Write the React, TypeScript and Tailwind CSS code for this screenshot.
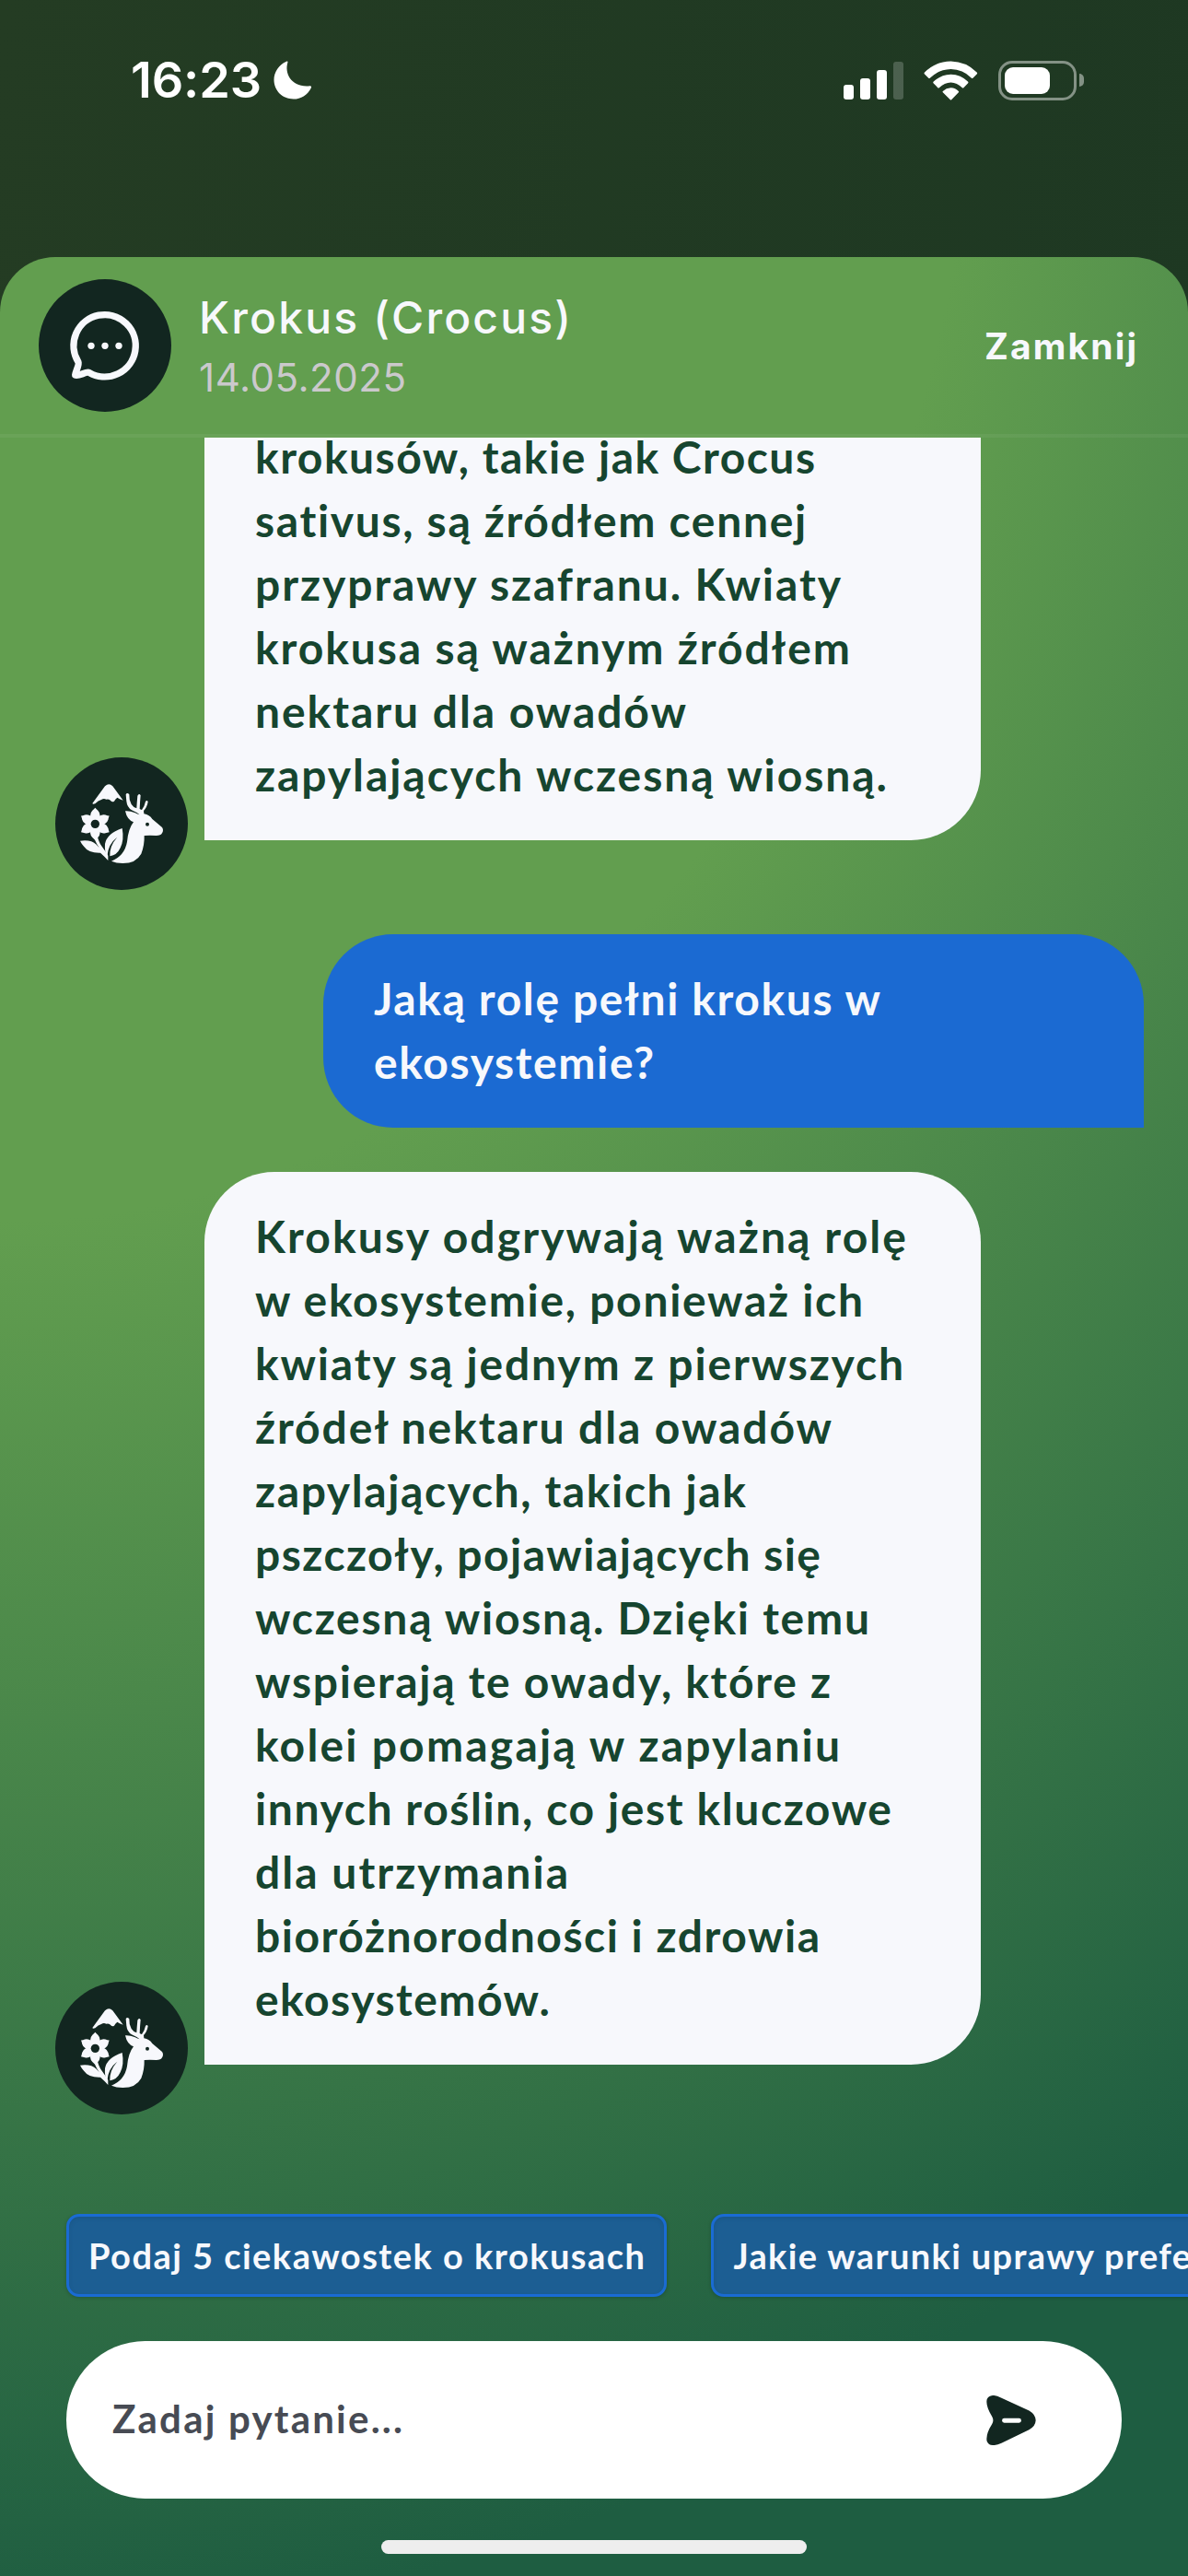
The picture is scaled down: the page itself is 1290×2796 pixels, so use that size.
import { useLayoutEffect, useRef, useState } from "react";

type LineProps = { text: string; width: number; chars?: number };

/** One line of text whose tracking is adjusted so that it spans `width` pixels. */
function Line({ text, width, chars }: LineProps) {
  const ref = useRef<HTMLSpanElement>(null);
  const [spacing, setSpacing] = useState(0);
  const count = chars ?? text.length;
  useLayoutEffect(() => {
    const node = ref.current?.firstChild;
    if (!node) return;
    const range = document.createRange();
    range.setStart(node, 0);
    range.setEnd(node, count);
    const natural = range.getBoundingClientRect().width - spacing * count;
    setSpacing((width - natural) / (count - 1));
  }, [text, width, count]);
  return (
    <span ref={ref} className="block whitespace-nowrap" style={{ letterSpacing: `${spacing}px` }}>
      {text}
    </span>
  );
}

function StatusBar() {
  return (
    <div className="flex h-[174px] items-center justify-between pr-[113px] pl-[142px] text-white">
      <div className="flex items-center gap-[13px] font-[Inter,sans-serif] text-[54px] leading-none font-semibold">
        <div className="w-[142px]">
          <Line text="16:23" width={142} />
        </div>
        <svg className="h-[42px] w-[42px]" viewBox="0 0 42 42" fill="currentColor">
          <path d="M14 .8C14.6.1 15.8.8 15.4 1.8C11.5 14 20 29.5 39.5 27.3C40.9 27.1 41.4 28.3 40.8 29.4C36.8 37.2 29.8 41.5 21.7 41.5C9.6 41.5.5 32.5.5 20.6C.5 12.6 5.6 4.6 14 .8Z" />
        </svg>
      </div>
      <div className="flex items-center">
        <div className="flex h-[41px] items-end gap-[7px]">
          <div className="h-4 w-[11px] rounded-[3px] bg-white" />
          <div className="h-[23px] w-[11px] rounded-[3px] bg-white" />
          <div className="h-8 w-[11px] rounded-[3px] bg-white" />
          <div className="h-[41px] w-[11px] rounded-[3px] bg-white/20" />
        </div>
        <svg className="ml-[22px] h-[43px] w-[59px]" viewBox="370 74 176 128" fill="currentColor">
          <path d="M373 117Q370 114 373 111Q408 76 458 75Q508 76 542 111Q545 114 542 117L530 129Q527 132 524 129Q497 102 458 101Q419 102 391 129Q388 132 385 129Z" />
          <path d="M402 147Q399 144 402 141Q426 119 458 118Q490 119 513 141Q516 144 513 147L500 160Q497 163 494 160Q478 145 458 144Q437 145 421 160Q418 163 415 160Z" />
          <path d="M432 176Q430 174 432 172Q443 162 458 161Q473 162 483 172Q485 174 483 176L460 200Q458 202 456 200Z" />
        </svg>
        <div className="ml-[22px] flex items-center gap-[3px]">
          <div className="h-[43px] w-[85px] rounded-[15px] border-[3px] border-white/45 p-1">
            <div className="h-[29px] w-[49px] rounded-[9px] bg-white" />
          </div>
          <div className="h-[14px] w-[5px] rounded-r-full bg-white/45" />
        </div>
      </div>
    </div>
  );
}

function Header() {
  return (
    <header className="flex h-[196px] shrink-0 items-center justify-between border-b-4 border-white/5 pr-[54px] pl-[42px] font-[Inter,sans-serif] text-[#f7f8fc]">
      <div className="flex items-center gap-[30px]">
        <svg className="size-36" viewBox="126 100 432 432" fill="none">
          <circle cx="342" cy="316" r="216" fill="#122620" />
          <path
            d="M290 404A101 101 0 1 0 255 370C259 379 246 402 245 412C255 418 280 400 290 404Z"
            stroke="#f7f8fc"
            strokeWidth="22"
            strokeLinejoin="round"
          />
          <circle cx="297" cy="317" r="11" fill="#f7f8fc" />
          <circle cx="342" cy="317" r="11" fill="#f7f8fc" />
          <circle cx="387" cy="317" r="11" fill="#f7f8fc" />
        </svg>
        <div className="flex flex-col pt-1">
          <div className="h-[66px] text-[48px] leading-[64px] font-medium">
            <Line text="Krokus (Crocus)" width={404} />
          </div>
          <div className="h-[62px] text-[42px] leading-[62px] text-[#cbc9cc]">
            <Line text="14.05.2025" width={225} />
          </div>
        </div>
      </div>
      <div className="w-[167px] text-[39px] leading-none font-bold">
        <Line text="Zamknij" width={165} />
      </div>
    </header>
  );
}

function Avatar() {
  return (
    <svg className="size-36 shrink-0" viewBox="60 66 432 432" fill="#f7f8fc">
      <circle cx="276" cy="282" r="216" fill="#122620" />
      <path d="M181 216L222 160Q235 147 247 160L281 206Q268 201 262 197Q256 201 252 209Q246 213 241 208Q236 200 226 203Q218 199 210 204Q200 206 190 217Q182 220 181 216Z" />
      {[0, 60, 120, 180, 240, 300].map((angle) => (
        <path
          key={angle}
          d="M180 278Q168 252 181 239Q186 235 190 230Q194 235 199 239Q212 252 200 278Z"
          transform={`rotate(${angle} 190 283)`}
        />
      ))}
      <circle cx="190" cy="283" r="14" fill="#122620" />
      <path d="M184 308Q189 305 195 308Q198 338 213 358Q222 370 232 386L232 402Q222 390 207 377Q168 378 154 357Q146 349 141 338Q176 333 194 350Q199 355 203 360Q185 335 184 308Z" />
      <path d="M278 297Q285 335 272 361Q261 385 238 388Q236 355 262 326Q232 348 229 389Q220 373 222 348Q228 314 278 297Z" />
      <path d="M288 241Q304 240 320 247Q328 251 335 253Q325 245 309 238Q294 228 292 209L290 187Q294 179 301 187Q300 205 308 219Q315 230 325 232Q326 212 328 191Q333 182 338 190Q336 211 335 234Q340 237 342 237Q350 228 354 210Q359 204 362 211Q359 229 348 240L349 250Q367 253 376 267L408 294Q414 303 408 313Q404 321 389 321Q368 319 350 321Q351 352 340 380Q323 411 280 411Q258 411 243 404Q286 386 294 341Q298 298 315 277Q294 270 288 241Z" />
      <circle cx="360" cy="284" r="6" fill="#122620" />
    </svg>
  );
}

type Lines = [string, number][];

function BotMessage({ lines, continued = false }: { lines: Lines; continued?: boolean }) {
  return (
    <div className="flex shrink-0 items-end gap-[18px] pl-[60px]">
      <Avatar />
      <div
        className={`mb-[54px] w-[843px] bg-[#f7f8fc] pt-[35px] pb-[37px] pl-[55px] font-[Lato,sans-serif] text-[48px] leading-[69px] font-bold text-[#16452f] ${
          continued ? "rounded-br-[76px]" : "rounded-t-[76px] rounded-br-[76px]"
        }`}
      >
        {lines.map(([text, width]) => (
          <Line key={text} text={text} width={width} />
        ))}
      </div>
    </div>
  );
}

function UserMessage({ lines }: { lines: Lines }) {
  return (
    <div className="mr-12 w-[891px] shrink-0 self-end rounded-[76px] rounded-br-none bg-[#1b6ad2] pt-[35px] pb-[37px] pl-[55px] font-[Lato,sans-serif] text-[48px] leading-[69px] font-bold text-[#f7f8fc]">
      {lines.map(([text, width]) => (
        <Line key={text} text={text} width={width} />
      ))}
    </div>
  );
}

function Suggestion({ text, width, chars }: LineProps) {
  return (
    <button className="h-[90px] shrink-0 rounded-[14px] border-[3px] border-[#1a6bd3] bg-[#1c5e93] pr-5 pl-[21px] text-left font-[Lato,sans-serif] text-[38px] leading-none font-bold text-[#f7f8fc] shadow-[0_1px_4px_rgba(0,0,0,0.2),inset_0_2px_5px_rgba(0,0,0,0.08)]">
      <Line text={text} width={width} chars={chars} />
    </button>
  );
}

export default function App() {
  return (
    <div className="h-[2796px] w-[1290px] overflow-hidden bg-linear-100 from-[#243c23] to-[#1c3722]">
      <div className="h-[279px]">
        <StatusBar />
      </div>
      <main className="flex h-[2517px] flex-col rounded-t-[60px] bg-[radial-gradient(2280px_2850px_at_0px_-279px,#629e4f_46.5%,#1e5d41_100%)]">
        <Header />
        <section className="flex h-[1820px] shrink-0 flex-col justify-end gap-12 overflow-hidden">
          <BotMessage
            continued
            lines={[
              ["krokusów, takie jak Crocus", 608],
              ["sativus, są źródłem cennej", 599],
              ["przyprawy szafranu. Kwiaty", 636],
              ["krokusa są ważnym źródłem", 646],
              ["nektaru dla owadów", 468],
              ["zapylających wczesną wiosną.", 686],
            ]}
          />
          <UserMessage
            lines={[
              ["Jaką rolę pełni krokus w", 550],
              ["ekosystemie?", 304],
            ]}
          />
          <BotMessage
            lines={[
              ["Krokusy odgrywają ważną rolę", 707],
              ["w ekosystemie, ponieważ ich", 660],
              ["kwiaty są jednym z pierwszych", 704],
              ["źródeł nektaru dla owadów", 626],
              ["zapylających, takich jak", 533],
              ["pszczoły, pojawiających się", 614],
              ["wczesną wiosną. Dzięki temu", 667],
              ["wspierają te owady, które z", 625],
              ["kolei pomagają w zapylaniu", 635],
              ["innych roślin, co jest kluczowe", 691],
              ["dla utrzymania", 340],
              ["bioróżnorodności i zdrowia", 613],
              ["ekosystemów.", 320],
            ]}
          />
        </section>
        <div className="mt-[108px] flex shrink-0 gap-12 overflow-hidden pb-3 pl-[72px]">
          <Suggestion text="Podaj 5 ciekawostek o krokusach" width={604} />
          <Suggestion text="Jakie warunki uprawy preferują krokusy?" width={475} chars={25} />
        </div>
        <div className="mx-[72px] mt-9 flex h-[171px] shrink-0 items-center justify-between rounded-full bg-white pr-[93px] pl-[50px]">
          <div className="pb-0.5 font-[Lato,sans-serif] text-[42px] font-bold text-[#474b54]">
            <Line text="Zadaj pytanie..." width={315} />
          </div>
          <svg className="h-[54px] w-[54px]" viewBox="123 57 162 164">
            <path
              d="M143 57Q153 56 172 65L263 107Q284 119 285 139Q284 159 263 170L172 214Q156 222 143 221Q129 221 124 208Q119 186 141 151Q148 139 141 127Q119 92 124 70Q129 58 143 57Z"
              fill="#122620"
            />
            <rect x="174" y="132" width="63" height="15" rx="7" fill="#fff" />
          </svg>
        </div>
        <div className="mx-auto mt-[45px] h-[15px] w-[462px] shrink-0 rounded-full bg-[#eeeeee]" />
      </main>
    </div>
  );
}
